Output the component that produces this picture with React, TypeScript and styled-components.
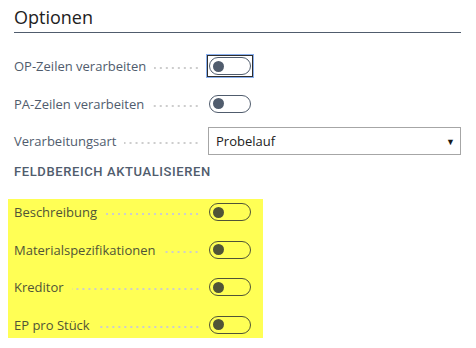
import styled, { createGlobalStyle } from "styled-components";

const GlobalStyle = createGlobalStyle`
    html, body {
        margin: 0;
        padding: 0;
        background: #ffffff;
    }
    body {
        font-family: "Open Sans", "Noto Sans", sans-serif;
    }
`;

const Page = styled.div`
    width: 476px;
    height: 348px;
    padding: 0 15px 0 8px;
    box-sizing: border-box;
    overflow: hidden;
`;

const Title = styled.h2`
    margin: 0 0 0 6px;
    padding: 5px 0 3px;
    font-size: 18px;
    font-weight: 400;
    color: #212121;
    border-bottom: 1px solid #505c6d;
    line-height: 24px;
`;

const Group = styled.div<{ $marked?: boolean }>`
    display: flex;
    flex-direction: column;
    gap: 11.5px;
    width: ${(p) => (p.$marked ? "255px" : "auto")};
    background: ${(p) => (p.$marked ? "#ffff55" : "transparent")};
    padding: ${(p) => (p.$marked ? "0" : "20px 0 0")};
`;

const Row = styled.div`
    display: flex;
    align-items: center;
    height: 26px;
`;

const Label = styled.div<{ $marked?: boolean }>`
    display: flex;
    align-items: center;
    width: 200px;
    padding-left: 6px;
    box-sizing: border-box;
    font-size: 13px;
    color: ${(p) => (p.$marked ? "#505437" : "#505c6d")};
    white-space: nowrap;
`;

const Dots = styled.span`
    flex: 1;
    height: 2px;
    margin: 4px 8px 0 8px;
    background-image: radial-gradient(circle, #cdcdcd 0.8px, transparent 1px);
    background-size: 6px 2px;
    background-position: right center;
`;

const Focus = styled.span<{ $focused?: boolean }>`
    display: inline-flex;
    padding: 1px;
    border: 1px solid ${(p) => (p.$focused ? "#2e2e2e" : "transparent")};
    outline: ${(p) => (p.$focused ? "1px solid #8ab0ef" : "none")};
    margin-left: -1px;
`;

const Switch = styled.span<{ $marked?: boolean }>`
    display: inline-flex;
    align-items: center;
    width: 42px;
    height: 18px;
    box-sizing: border-box;
    border: 1.5px solid ${(p) => (p.$marked ? "#505437" : "#505c6d")};
    border-radius: 9px;
    padding-left: 3px;
`;

const Knob = styled.span<{ $marked?: boolean }>`
    width: 11px;
    height: 11px;
    border-radius: 50%;
    background: ${(p) => (p.$marked ? "#505437" : "#505c6d")};
`;

const Select = styled.div`
    flex: 1;
    display: flex;
    align-items: center;
    justify-content: space-between;
    height: 28px;
    box-sizing: border-box;
    border: 1px solid #a6a6a6;
    padding: 0 5px 0 7px;
    font-size: 13px;
    color: #212121;
`;

const Arrow = styled.span`
    font-size: 9px;
    color: #1a1a1a;
`;

const Heading = styled.div`
    padding: 10px 0 19px 6px;
    font-family: "Roboto", sans-serif;
    font-weight: 500;
    font-size: 13px;
    line-height: 16px;
    letter-spacing: 0.6px;
    color: #505c6d;
`;

function Toggle({ marked, focused }: { marked?: boolean; focused?: boolean }) {
    return (
        <Focus $focused={focused}>
            <Switch $marked={marked}>
                <Knob $marked={marked} />
            </Switch>
        </Focus>
    );
}

const fields = ["Beschreibung", "Materialspezifikationen", "Kreditor", "EP pro Stück"];

function App() {
    return (
        <Page>
            <GlobalStyle />
            <Title>Optionen</Title>
            <Group>
                <Row>
                    <Label>
                        OP-Zeilen verarbeiten
                        <Dots />
                    </Label>
                    <Toggle focused />
                </Row>
                <Row>
                    <Label>
                        PA-Zeilen verarbeiten
                        <Dots />
                    </Label>
                    <Toggle />
                </Row>
                <Row>
                    <Label>
                        Verarbeitungsart
                        <Dots />
                    </Label>
                    <Select>
                        Probelauf
                        <Arrow>▼</Arrow>
                    </Select>
                </Row>
            </Group>
            <Heading>FELDBEREICH AKTUALISIEREN</Heading>
            <Group $marked>
                {fields.map((f) => (
                    <Row key={f}>
                        <Label $marked>
                            {f}
                            <Dots />
                        </Label>
                        <Toggle marked />
                    </Row>
                ))}
            </Group>
        </Page>
    );
}

export default App;
